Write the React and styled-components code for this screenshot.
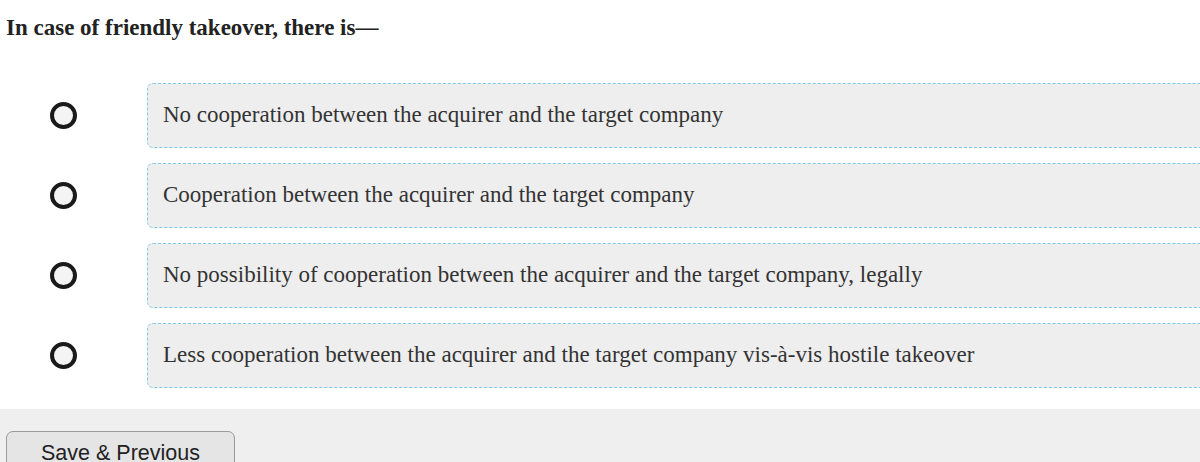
import React from "react";
import styled, { createGlobalStyle } from "styled-components";

const Global = createGlobalStyle`
  html, body { margin: 0; padding: 0; background: #ffffff; }
  body { font-family: "Liberation Serif", "Times New Roman", serif; overflow: hidden; }
`;

const Page = styled.div`
  width: 1200px;
  height: 462px;
  display: flex;
  flex-direction: column;
  overflow: hidden;
`;

const Question = styled.div`
  flex: none;
  padding: 15px 0 0 6px;
  height: 83px;
  box-sizing: border-box;
  font-family: "Liberation Serif", "Times New Roman", serif;
  font-weight: bold;
  font-size: 23px;
  color: #222;
  line-height: 26px;
`;

const Options = styled.div`
  flex: none;
  display: flex;
  flex-direction: column;
  gap: 15px;
`;

const Row = styled.label`
  display: flex;
  align-items: center;
  height: 65px;
`;

const RadioCell = styled.div`
  width: 147px;
  flex: none;
  display: flex;
  justify-content: center;
  padding-right: 20px;
  box-sizing: border-box;
`;

const Radio = styled.span`
  width: 27px;
  height: 27px;
  box-sizing: border-box;
  border: 4px solid #1a1a1a;
  border-radius: 50%;
  background: #f4f4f4;
`;

const OptionBox = styled.div`
  flex: 1;
  height: 65px;
  box-sizing: border-box;
  margin-right: -10px;
  border: 1px dashed #7fcce2;
  border-radius: 6px;
  background: #eeeeee;
  display: flex;
  align-items: center;
  padding: 0 0 2px 15px;
  font-family: "Liberation Serif", "Times New Roman", serif;
  font-size: 23px;
  color: #333;
`;

const Footer = styled.div`
  flex: none;
  height: 53px;
  box-sizing: border-box;
  overflow: hidden;
  background: #f0efef;
  padding: 22px 0 0 6px;
  margin-top: 21px;
`;

const Button = styled.button`
  width: 229px;
  height: 44px;
  box-sizing: border-box;
  border: 1px solid #9a9a9a;
  border-radius: 7px;
  background: #e5e5e5;
  font-family: "Liberation Sans", Arial, sans-serif;
  font-size: 21.5px;
  color: #222;
  padding: 9px 0 0 0;
  display: flex;
  justify-content: center;
  align-items: flex-start;
`;

const options = [
  "No cooperation between the acquirer and the target company",
  "Cooperation between the acquirer and the target company",
  "No possibility of cooperation between the acquirer and the target company, legally",
  "Less cooperation between the acquirer and the target company vis-à-vis hostile takeover",
];

export default function App() {
  return (
    <Page>
      <Global />
      <Question>In case of friendly takeover, there is—</Question>
      <Options>
        {options.map((o) => (
          <Row key={o}>
            <RadioCell>
              <Radio />
            </RadioCell>
            <OptionBox>{o}</OptionBox>
          </Row>
        ))}
      </Options>
      <Footer>
        <Button>Save &amp; Previous</Button>
      </Footer>
    </Page>
  );
}
